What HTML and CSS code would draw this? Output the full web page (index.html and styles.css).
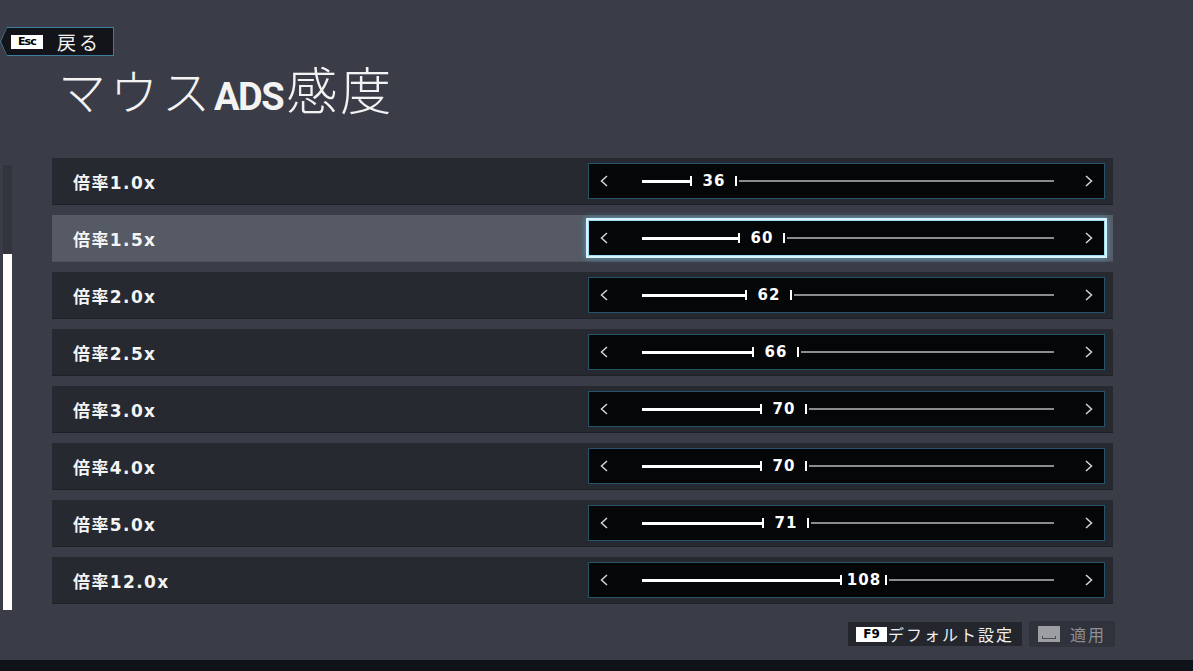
FILE: index.html
```html
<!DOCTYPE html>
<html lang="ja">
<head>
<meta charset="utf-8">
<title>マウスADS感度</title>
<link rel="stylesheet" href="styles.css">
</head>
<body>
<div class="page">
  <div class="topbar">
    <div class="back">
      <div class="back-inner">
        <span class="key-esc">Esc</span>
        <span class="back-label">戻る</span>
      </div>
    </div>
  </div>
  <h1 class="title"><span class="kana">マウス</span><span class="latin">ADS</span><span class="kanji">感度</span></h1>

  <div class="content">
    <div class="scrollbar"><div class="thumb"></div></div>
    <div class="list">
      <div class="row">
        <div class="row-label">倍率1.0x</div>
        <div class="slider">
          <svg class="chev" viewBox="0 0 8 12"><polyline points="7,1 1.5,6 7,11"/></svg>
          <div class="track"><div class="fill" style="width:48px"></div><div class="val"><i class="tick"></i><span>36</span><i class="tick"></i></div><div class="rest"></div></div>
          <svg class="chev" viewBox="0 0 8 12"><polyline points="1,1 6.5,6 1,11"/></svg>
        </div>
      </div>
      <div class="row selected">
        <div class="row-label">倍率1.5x</div>
        <div class="slider">
          <svg class="chev" viewBox="0 0 8 12"><polyline points="7,1 1.5,6 7,11"/></svg>
          <div class="track"><div class="fill" style="width:96px"></div><div class="val"><i class="tick"></i><span>60</span><i class="tick"></i></div><div class="rest"></div></div>
          <svg class="chev" viewBox="0 0 8 12"><polyline points="1,1 6.5,6 1,11"/></svg>
        </div>
      </div>
      <div class="row">
        <div class="row-label">倍率2.0x</div>
        <div class="slider">
          <svg class="chev" viewBox="0 0 8 12"><polyline points="7,1 1.5,6 7,11"/></svg>
          <div class="track"><div class="fill" style="width:103px"></div><div class="val"><i class="tick"></i><span>62</span><i class="tick"></i></div><div class="rest"></div></div>
          <svg class="chev" viewBox="0 0 8 12"><polyline points="1,1 6.5,6 1,11"/></svg>
        </div>
      </div>
      <div class="row">
        <div class="row-label">倍率2.5x</div>
        <div class="slider">
          <svg class="chev" viewBox="0 0 8 12"><polyline points="7,1 1.5,6 7,11"/></svg>
          <div class="track"><div class="fill" style="width:110px"></div><div class="val"><i class="tick"></i><span>66</span><i class="tick"></i></div><div class="rest"></div></div>
          <svg class="chev" viewBox="0 0 8 12"><polyline points="1,1 6.5,6 1,11"/></svg>
        </div>
      </div>
      <div class="row">
        <div class="row-label">倍率3.0x</div>
        <div class="slider">
          <svg class="chev" viewBox="0 0 8 12"><polyline points="7,1 1.5,6 7,11"/></svg>
          <div class="track"><div class="fill" style="width:118px"></div><div class="val"><i class="tick"></i><span>70</span><i class="tick"></i></div><div class="rest"></div></div>
          <svg class="chev" viewBox="0 0 8 12"><polyline points="1,1 6.5,6 1,11"/></svg>
        </div>
      </div>
      <div class="row">
        <div class="row-label">倍率4.0x</div>
        <div class="slider">
          <svg class="chev" viewBox="0 0 8 12"><polyline points="7,1 1.5,6 7,11"/></svg>
          <div class="track"><div class="fill" style="width:118px"></div><div class="val"><i class="tick"></i><span>70</span><i class="tick"></i></div><div class="rest"></div></div>
          <svg class="chev" viewBox="0 0 8 12"><polyline points="1,1 6.5,6 1,11"/></svg>
        </div>
      </div>
      <div class="row">
        <div class="row-label">倍率5.0x</div>
        <div class="slider">
          <svg class="chev" viewBox="0 0 8 12"><polyline points="7,1 1.5,6 7,11"/></svg>
          <div class="track"><div class="fill" style="width:120px"></div><div class="val"><i class="tick"></i><span>71</span><i class="tick"></i></div><div class="rest"></div></div>
          <svg class="chev" viewBox="0 0 8 12"><polyline points="1,1 6.5,6 1,11"/></svg>
        </div>
      </div>
      <div class="row">
        <div class="row-label">倍率12.0x</div>
        <div class="slider">
          <svg class="chev" viewBox="0 0 8 12"><polyline points="7,1 1.5,6 7,11"/></svg>
          <div class="track"><div class="fill" style="width:198px"></div><div class="val"><i class="tick"></i><span>108</span><i class="tick"></i></div><div class="rest"></div></div>
          <svg class="chev" viewBox="0 0 8 12"><polyline points="1,1 6.5,6 1,11"/></svg>
        </div>
      </div>
    </div>
  </div>

  <div class="footer">
    <div class="fbtn default-btn"><span class="key-f9">F9</span><span class="fbtn-label">デフォルト設定</span></div>
    <div class="fbtn apply-btn"><span class="key-space"><i></i></span><span class="fbtn-label dim">適用</span></div>
  </div>
  <div class="strip"></div>
</div>
</body>
</html>
```

FILE: styles.css
```css
* { box-sizing: border-box; }
html, body { margin: 0; padding: 0; }
body {
  background: #3a3c47;
  font-family: "Noto Sans CJK JP", "Noto Sans", sans-serif;
  color: #fff;
  overflow: hidden;
}
.page {
  width: 1193px;
  height: 671px;
  display: flex;
  flex-direction: column;
}

/* back button */
.topbar {
  padding-top: 27px;
  display: flex;
}
.back {
  width: 114px;
  height: 29px;
  padding: 1px;
  background: #3b7e9d;
  clip-path: polygon(7px 0, 100% 0, 100% 100%, 7px 100%, 0 50%);
}
.back-inner {
  width: 100%;
  height: 100%;
  background: #121419;
  clip-path: polygon(6px 0, 100% 0, 100% 100%, 6px 100%, 0 50%);
  display: flex;
  align-items: center;
  padding-left: 10px;
}
.key-esc {
  width: 32px;
  height: 14px;
  background: #fff;
  color: #000;
  font-family: "DejaVu Sans", sans-serif;
  font-weight: 700;
  font-size: 11px;
  letter-spacing: -0.8px;
  display: flex;
  align-items: center;
  justify-content: center;
}
.back-label {
  margin-left: 14px;
  font-size: 19px;
  line-height: 1;
  color: #f2f2f2;
  letter-spacing: 3px;
}

/* title */
.title {
  margin: 9px 0 0 58px;
  height: 46px;
  font-size: 48px;
  line-height: 46px;
  font-weight: 300;
  color: #f3f3f3;
  display: flex;
  align-items: baseline;
}
.title .kana { letter-spacing: 4px; }
.title .latin {
  font-family: "Roboto", sans-serif;
  font-weight: 700;
  font-size: 38px;
  letter-spacing: -1.5px;
  margin-right: 3px;
}
.title .kanji { font-size: 51px; letter-spacing: 3px; }

/* content */
.content {
  margin-top: 47px;
  display: flex;
  align-items: flex-start;
}
.scrollbar {
  margin: 7px 0 0 3px;
  width: 9px;
  height: 445px;
  background: #32353e;
  display: flex;
  flex-direction: column;
  justify-content: flex-end;
}
.thumb {
  height: 356px;
  background: #fff;
}
.list {
  margin-left: 40px;
  width: 1061px;
  display: flex;
  flex-direction: column;
  gap: 10px;
}
.row {
  height: 47px;
  background: #262930;
  border-bottom: 1px solid #1f2126;
  display: flex;
  align-items: center;
  justify-content: space-between;
  padding: 0 8px 0 21px;
}
.row.selected {
  background: #565a64;
  border-bottom-color: #4c5058;
}
.row-label {
  font-family: "DejaVu Sans", "Noto Sans CJK JP", sans-serif;
  font-weight: 700;
  font-size: 17px;
  letter-spacing: 1.4px;
  color: #f4f4f4;
}

/* slider */
.slider {
  width: 517px;
  height: 36px;
  background: #050608;
  border: 1px solid #24536a;
  display: flex;
  align-items: center;
  padding: 0 11px 0 11px;
}
.row.selected .slider {
  border-color: #9fdcf5;
  outline: 2px solid #d9f3ff;
  box-shadow: 0 0 6px 2px rgba(90, 190, 235, 0.7);
}
.chev {
  width: 8px;
  height: 12px;
  flex: none;
  fill: none;
  stroke: #d4d4d4;
  stroke-width: 1.5;
}
.track {
  flex: 1;
  margin: 0 31px 0 34px;
  display: flex;
  align-items: center;
  height: 12px;
}
.fill {
  height: 3px;
  background: #fff;
  flex: none;
}
.val {
  width: 47px;
  flex: none;
  display: flex;
  align-items: center;
  justify-content: space-between;
}
.tick {
  display: block;
  width: 2px;
  height: 10px;
  background: #fff;
}
.val span {
  font-family: "DejaVu Sans", sans-serif;
  font-weight: 700;
  font-size: 15px;
  line-height: 1;
  letter-spacing: 1px;
  color: #fff;
  margin-right: -1px;
}
.rest {
  flex: 1;
  height: 2px;
  margin-left: 2px;
  background: #8c8c8c;
}

/* footer */
.footer {
  margin-top: 11px;
  display: flex;
  justify-content: flex-end;
  align-items: center;
  gap: 7px;
  padding-right: 78px;
}
.fbtn {
  display: flex;
  align-items: center;
}
.default-btn {
  width: 174px;
  height: 24px;
  background: #23262d;
  padding-left: 8px;
}
.apply-btn {
  width: 86px;
  height: 26px;
  background: #30333b;
  padding-left: 9px;
}
.key-f9 {
  width: 31px;
  height: 15px;
  background: #fff;
  color: #000;
  font-family: "DejaVu Sans", sans-serif;
  font-weight: 700;
  font-size: 12px;
  display: flex;
  align-items: center;
  justify-content: center;
}
.fbtn-label {
  margin-left: 1px;
  font-size: 16px;
  line-height: 1;
  letter-spacing: 2px;
  color: #f0f0f0;
}
.fbtn-label.dim {
  margin-left: 10px;
  color: #8d9096;
}
.key-space {
  width: 22px;
  height: 16px;
  background: #9c9ea3;
  display: flex;
  align-items: flex-end;
  justify-content: center;
  padding-bottom: 3px;
}
.key-space i {
  display: block;
  width: 14px;
  height: 3px;
  border: 1px solid #4a4c52;
  border-top: none;
}
.strip {
  margin-top: auto;
  height: 11px;
  background: #0f1218;
}
```
